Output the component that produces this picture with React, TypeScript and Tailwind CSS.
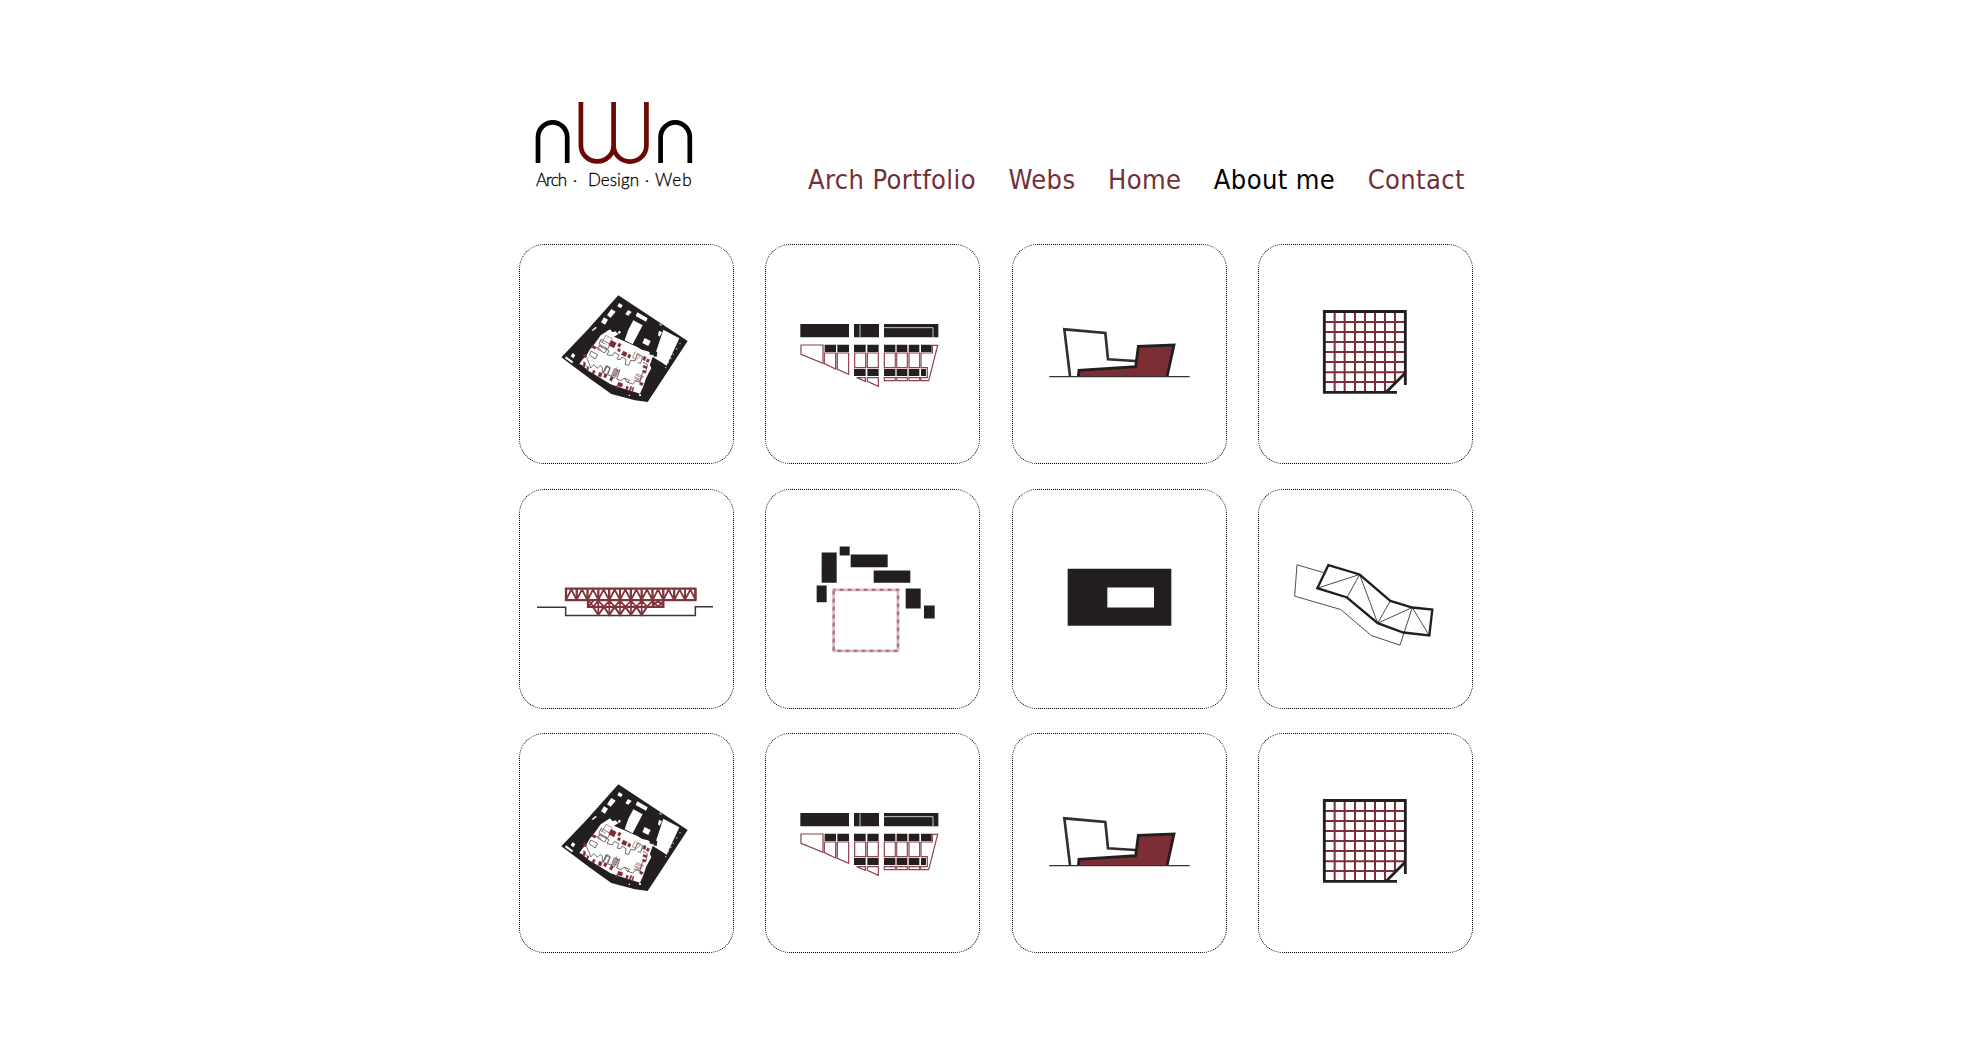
import type { ReactNode } from "react";

const INK = "#231f20";
const RED = "#7b2f35";

function Drawing({ x, y, label, children }: { x: number; y: number; label: string; children: ReactNode }) {
  return (
    <svg className="block h-full w-full" viewBox={`${x} ${y} 639 654`} role="img" aria-label={label} fill="none">
      {children}
    </svg>
  );
}

function FloorPlan() {
  return (
    <Drawing x={-90} y={-120} label="Floor plan">
      <path fill={INK} d="M205 31L413 168L293 351L255 346L184 327L120 281L34 217L110 137Z" />
      <g fill="#fff">
        {/* courtyard */}
        <path d="M180 133L188 142L196 139L205 148L192 155L262 186L275 194L293 199L310 207L314 213L304 230L300 240L305 248L297 262L288 280L280 304L270 326L256 322L236 316L205 306L182 298L140 272L116 258L95 239L88 238L98 222L112 207L120 193L131 180L142 165L152 151L166 142Z" />
        {/* rooms */}
        <path d="M250 106L278 121L248 178L224 166L235 134Z" />
        <path d="M340 134L388 160L350 242L312 219Z" />
        <path d="M207 54L218 61L213 70L202 64Z" />
        <path d="M234 75L245 81L235 92L226 88Z" />
        <path d="M262 82L293 100L288 110L257 93Z" />
        <path d="M184 72L197 80L182 98L171 91Z" />
        <path d="M162 97L174 104L165 119L153 112Z" />
        <path d="M284 159L302 168L295 183L277 174Z" />
        <path d="M68 204L76 211L70 220L62 214Z" />
        <path d="M48 214L70 230L66 235L45 220Z" />
        <path d="M125 136L137 125L140 129L128 138Z" />
        <path d="M327 137L336 142L329 155L324 151Z" />
        <path d="M207 137l6 3l-4 7l-6-3z" />
        <path d="M236 329h4v4h-4zM267 328h6v5h-6z" />
      </g>
      <path
        fill={INK}
        d="M310 195L322 202L320 216L310 213ZM300 200l10 4l-2 7l-10-3zM308 216L340 236L338 250L304 250L300 240Z"
      />
      <g fill="#aaa">
        <path d="M388 174h4v4h-4zM378 190h4v4h-4zM368 206h4v4h-4zM361 218h4v4h-4zM353 231h4v4h-4zM345 246h4v4h-4zM330 115l6 4l-3 4l-6-4z" />
      </g>
      <g stroke="#4d4849" strokeWidth="2.4">
        <path d="M166 190L177 198L171 209L187 212L193 202L207 210L201 222L211 224L216 216L228 224L226 239L236 241L242 226L255 228L262 206L278 215L272 235L263 233" />
        <path d="M110 220L118 236L122 249L131 239L142 250L151 241L158 249L156 263L163 260L168 244L180 251L173 269L184 274L193 271L201 255L209 258L200 282L214 287L223 279L231 291L248 297L259 287L269 290L277 265L288 260L292 239L279 232" />
        <path d="M153 163L181 178L173 192L147 177ZM149 182l21 12l-6 10l-20-11zM123 198l20 11l-7 13l-18-12zM169 242l12 6l-11 21l-11-6zM193 251l11 5l-11 23l-9-5zM225 280l13 6l-5 8" />
      </g>
      <g stroke="#a66a70" strokeWidth="2.4">
        <path d="M155 174L168 151L188 162M136 187L148 194M107 212l7 8M116 249L104 239M174 241l-10 18M256 200L247 218L254 222L268 207M260 205L272 211L260 224M201 247L190 270L199 274L210 252M258 266L282 275M252 275L274 284M250 285L270 292M278 221L290 227M96 225L111 211" />
        <path d="M141 187l13 8M144 181l14 8M150 169l18 9M256 270l23 9M254 280l18 7M198 250l-9 18" />
      </g>
      <g fill={RED} stroke={RED} strokeWidth="1">
        <path d="M183 165L199 174L192 189L176 181ZM207 174l7 4l-5 9l-7-4zM220 198l12 6l-6 11l-12-6zM236 207l7 4l-4 9l-7-4zM205 190l7 4l-3 7l-7-4z" />
        <path d="M127 180l12 6l-4 7l-11-6zM103 207l8 5l-5 7l-7-5zM282 213l7 4l-5 10l-6-3zM292 221l7 3l-4 9l-6-3zM281 241l11 4l-3 6l-11-4zM279 255l10 4l-3 6l-9-4zM271 291l9 4l-4 7l-8-4z" />
        <path d="M101 230l6 3l-3 14l-5-3zM112 245l5 2l-3 9l-5-2zM130 255l6 3l-4 10l-6-3zM148 261l9 5l-5 11l-8-4zM164 266l8 4l-5 9l-7-4zM183 275l7 3l-5 11l-7-4zM205 291l14 5l-4 11l-13-5zM229 303l7 3l-4 10l-5-2zM242 304l4 1l-5 14l-4-1zM249 306l3 1l-4 15l-4-1zM198 302l6 2l-2 5l-6-2z" />
      </g>
      <path stroke={RED} strokeWidth="1.5" d="M182 297l3 9M276 272L270 291" />
    </Drawing>
  );
}

function TerraceBlocks() {
  return (
    <Drawing x={-42} y={-195} label="Terrace blocks">
      <path fill={INK} d="M61 42H207V82H61ZM222 42H297V82H222ZM312 42H475V82H312Z" />
      <path stroke="#c9c7c7" strokeWidth="3" d="M240 43V82M312 53H459V82" />
      <g fill={INK}>
        <path d="M134 104H168V126H134ZM172 104H207V126H172ZM222 104H257V126H222ZM262 104H296V126H262ZM312 104H346V126H312ZM350 104H382V126H350ZM387 104H418V126H387ZM423 104H455V126H423Z" />
        <path d="M222 177H257V198H222ZM262 177H296V198H262ZM312 177H346V198H312ZM350 177H382V198H350ZM387 177H418V198H387ZM423 177H438V198H423Z" />
      </g>
      <g stroke="#8d434c" strokeWidth="3.6">
        <path d="M63 105H129V160L63 133Z" />
        <path d="M133 129H167V177L133 161Z" />
        <path d="M172 129H206V193L172 178Z" />
        <path d="M224 129H257V173H224ZM262 129H295V173H262ZM313 129H346V173H313ZM350 129H382V173H350ZM387 129H419V173H387Z" />
        <path d="M423 173V129H457V106H473L446 212H422V203H442V173Z" />
        <path d="M313 203H346V212H313ZM350 203H382V212H350ZM387 203H419V212H387ZM230 203H256V214ZM262 203H295V229L262 214Z" />
      </g>
      <path stroke="#b98389" strokeWidth="2" d="M131 104V160M169.500 129V177M348 104V212M385 104V212M421 129V173" />
    </Drawing>
  );
}

function HouseSection() {
  return (
    <Drawing x={-51} y={-195} label="House elevation">
      <path stroke="#303032" strokeWidth="8" d="M120 198L103 58L226 69L234 148L316 153" />
      <path fill={RED} stroke={INK} strokeWidth="8.500" d="M145 200L147 181L317 170L325 109L432 105L411 200" />
      <path stroke="#333" strokeWidth="4" d="M58 200H479" />
    </Drawing>
  );
}

function GridPlan() {
  return (
    <Drawing x={-123} y={-135} label="Grid plan">
      <path
        stroke={RED}
        strokeWidth="6"
        d="M104 64V306M134 64V306M165 64V306M195 64V306M225 64V306M255 64V306M285 64V276M73 96H316M73 126H316M73 156H316M73 186H316M73 216H316M73 247H314M73 276H285"
      />
      <path stroke={INK} strokeWidth="8.500" d="M316 285V64.500H73V307H291M315 250L259 306" />
    </Drawing>
  );
}

function TrussBridge() {
  const bays = [138, 170, 203, 235, 268, 300, 333, 365, 398, 430, 463, 495];
  return (
    <Drawing x={0} y={-241.500} label="Truss bridge">
      <path stroke="#3a3739" strokeWidth="4.500" d="M51 110.500H137V135H526V109H579" />
      <g stroke="#80343b" strokeWidth="7">
        <path d="M138 54.500H526V89H138ZM204 92V109H430V92" />
        {bays.map((b) => (
          <path key={b} strokeWidth="5.500" d={`M${b} 55V88L${b + 16} 57L${b + 32} 88V55`} />
        ))}
        <path strokeWidth="5" d="M206 91L220 108L235 91L252 108L268 91L284 108L300 91L316 108L333 91L349 108L365 91L381 108L398 91L414 108L430 91M206 107L220 91M398 107L414 91L430 107M235 90V133M268 90V133M300 90V133M333 90V133M365 90V133M398 90V109" />
        <path strokeWidth="6" d="M219 109L235 133L252 109L268 133L284 109L300 133L316 109L333 133L349 109L365 133L381 109" />
      </g>
    </Drawing>
  );
}

function SitePlan() {
  return (
    <Drawing x={-101} y={-121.500} label="Site plan">
      <path
        fill={INK}
        d="M66 66H111V157H66ZM120 48H150V75H120ZM153 72H264V110H153ZM222 120H332V157H222ZM51 165H81V215H51ZM318 174H363V234H318ZM373 225H405V264H373Z"
      />
      <rect x="102" y="178" width="193" height="183" stroke="#dcbcc2" strokeWidth="8.500" />
      <rect x="102" y="178" width="193" height="183" stroke="#a5757e" strokeWidth="7" strokeDasharray="11 13" strokeDashoffset="6" />
    </Drawing>
  );
}

function CourtyardBlock() {
  return (
    <Drawing x={-111} y={-181.500} label="Courtyard block">
      <path fill={INK} fillRule="evenodd" d="M53 55H364V226H53ZM172 111V171H312V111Z" />
    </Drawing>
  );
}

function FoldedRoof() {
  return (
    <Drawing x={-63} y={-181.500} label="Folded roof">
      <path stroke="#484546" strokeWidth="2.900" d="M130 66L51 43L44 137L182 177L274 255L360 284L397 171" />
      <path stroke="#484546" strokeWidth="2.900" d="M112 113L239 72L201 141M239 72L293 218L331 151M293 218L397 171L447 254" />
      <path stroke={INK} strokeWidth="7" d="M145 44L239 72L331 151L397 171L457 177L448 255L370 246L293 218L201 141L112 113Z" />
    </Drawing>
  );
}

function Logo() {
  return (
    <svg className="h-[100px] w-[180px]" viewBox="525 95 180 100" role="img" aria-label="nWn" fill="none">
      <g strokeWidth="4.700">
        <path stroke="#000" d="M538 163V137.500A14.600 15.200 0 0 1 567.200 137.500V163M660.600 163V137.500A14.600 15.200 0 0 1 689.800 137.500V163" />
        <path stroke="#6d0905" d="M580.900 102V145.500A16.350 16 0 0 0 613.600 145.500A16.350 16 0 0 0 646.400 145.500V102M613.600 102V147" />
      </g>
      <g fill="#000" stroke="#000" strokeWidth="0.300" className="font-['Lato'] text-[17px] font-light">
        <text x="536" y="186" textLength="31">Arch</text>
        <text x="573" y="186">·</text>
        <text x="588" y="186" textLength="51">Design</text>
        <text x="645" y="186">·</text>
        <text x="655" y="186" textLength="36.500">Web</text>
      </g>
    </svg>
  );
}

const links = ["Arch Portfolio", "Webs", "Home", "About me", "Contact"];

const projects = [
  FloorPlan, TerraceBlocks, HouseSection, GridPlan,
  TrussBridge, SitePlan, CourtyardBlock, FoldedRoof,
  FloorPlan, TerraceBlocks, HouseSection, GridPlan,
];

export default function App() {
  return (
    <div className="min-h-screen bg-white">
      <div className="mx-auto w-[964px] pl-[10px]">
        <header className="flex h-[244px] items-start justify-between pt-[95px] pr-[8px] pl-[6px]">
          <Logo />
          <nav className="mt-[67px] flex gap-[32.5px] font-['DejaVu_Sans_Condensed','DejaVu_Sans',sans-serif] text-[27px] leading-9 tracking-[0.4px] [font-stretch:condensed]">
            {links.map((name) => (
              <a key={name} href="#" className={name === "About me" ? "text-black" : "text-[#722f37]"}>
                {name}
              </a>
            ))}
          </nav>
        </header>
        <main className="grid w-[954px] grid-cols-[repeat(4,215px)] justify-between gap-y-[24.5px]">
          {projects.map((Project, i) => (
            <a key={i} href="#" className="block h-[220px] rounded-[25px] border border-dotted border-black">
              <Project />
            </a>
          ))}
        </main>
      </div>
    </div>
  );
}
